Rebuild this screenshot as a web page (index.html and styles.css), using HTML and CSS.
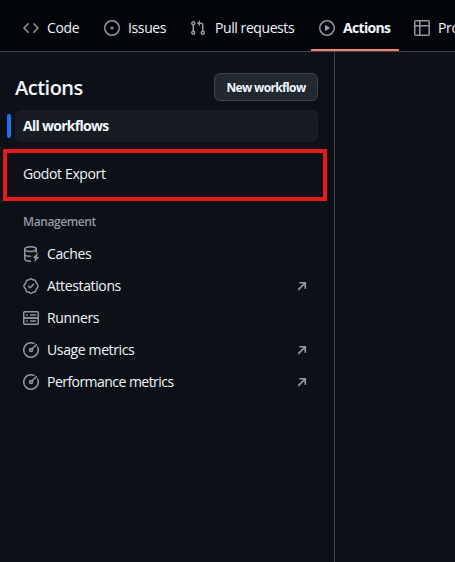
FILE: index.html
```html
<!DOCTYPE html>
<html lang="en">
<head>
<meta charset="utf-8">
<title>Actions</title>
<link rel="stylesheet" href="styles.css">
</head>
<body>
<nav class="tabs">
  <a class="tab"><svg class="icon" viewBox="0 0 16 16"><path d="M5.25 3.75 1 8l4.25 4.25M10.75 3.75 15 8l-4.25 4.25"/></svg><span class="code">Code</span></a>
  <a class="tab"><svg class="icon" viewBox="0 0 16 16"><circle cx="8" cy="8" r="7.25"/><circle class="solid" cx="8" cy="8" r="1.5"/></svg><span class="issues">Issues</span></a>
  <a class="tab"><svg class="icon" viewBox="0 0 16 16"><circle cx="3.25" cy="3.25" r="1.5"/><circle cx="3.25" cy="12.75" r="1.5"/><circle cx="12.75" cy="12.75" r="1.5"/><path d="M3.25 4.75v6.5M12.75 11.25V5A1.75 1.75 0 0 0 11 3.25H9"/><path class="solid" d="M7.2 3.07 9.57.68a.25.25 0 0 1 .43.18v4.78a.25.25 0 0 1-.43.18L7.2 3.43a.25.25 0 0 1 0-.36Z"/></svg><span class="pulls">Pull requests</span></a>
  <a class="tab current"><svg class="icon" viewBox="0 0 16 16"><circle cx="8" cy="8" r="7.25"/><path class="solid" d="M6 5.4v5.2c0 .3.35.5.6.34l4.27-2.6a.4.4 0 0 0 0-.68L6.6 5.06a.4.4 0 0 0-.6.34Z"/></svg><span class="actions">Actions</span></a>
  <a class="tab projects"><svg class="icon" viewBox="0 0 16 16"><rect x=".75" y=".75" width="14.5" height="14.5" rx="1"/><path d="M.75 5.75h14.5M5.75.75v14.5"/></svg><span>Projects</span></a>
</nav>
<div class="page">
  <aside class="sidebar">
    <header class="heading"><h1>Actions</h1><button>New workflow</button></header>
    <a class="row selected"><span>All workflows</span></a>
    <div class="highlight"><span>Godot Export</span></div>
    <h2>Management</h2>
    <a class="row"><svg class="icon" viewBox="0 0 16 16"><ellipse cx="7.5" cy="3.1" rx="5.75" ry="2.35"/><path d="M1.75 3.1v9.65c0 1.35 2.2 2.3 5.75 2.5M1.75 8c0 1.35 2.2 2.25 5.75 2.25M13.25 3.1v3.15"/><path class="solid" d="m14.25 7.1-4.1 4.3c-.25.3-.1.7.3.7h1.8l-.9 3.3c-.1.5.3.7.6.4l3.8-4.3c.3-.3.1-.75-.3-.75H13.8l.95-3.2c.15-.5-.2-.75-.5-.45Z"/></svg><span>Caches</span></a>
    <a class="row"><svg class="icon" viewBox="0 0 16 16"><path d="M7 1.1q1-.7 2 0l1 .75 1.3.15q1.3.2 1.6 1.5l.25 1.3 1.3 1.6q1.2 1.6 0 3.2l-1.3 1.6-.25 1.3q-.3 1.3-1.6 1.5l-1.3.15-1 .75q-1 .7-2 0l-1-.75-1.3-.15q-1.3-.2-1.6-1.5l-.25-1.3-1.3-1.6q-1.2-1.6 0-3.2l1.3-1.6.25-1.3q.3-1.3 1.6-1.5L6 1.85Z"/><path d="m5.5 8.2 1.6 1.6 3.4-3.4"/></svg><span>Attestations</span><svg class="arrow" viewBox="0 0 16 16"><path d="m4.2 11.8 7-7M5.25 4.75h6v6"/></svg></a>
    <a class="row"><svg class="icon" viewBox="0 0 16 16"><rect x=".75" y="1.75" width="14.5" height="6.25" rx="1"/><rect x=".75" y="8" width="14.5" height="6.25" rx="1"/><path class="slots" d="M3.4 5h.8M7.5 5h5M3.4 11h.8M7.5 11h5"/></svg><span>Runners</span></a>
    <a class="row"><svg class="icon" viewBox="0 0 16 16"><path d="M11 1.4a7.25 7.25 0 1 0 3.6 3.6M9 7l4.5-4.5"/><circle cx="8" cy="8" r="1.5"/></svg><span class="usage">Usage metrics</span><svg class="arrow" viewBox="0 0 16 16"><path d="m4.2 11.8 7-7M5.25 4.75h6v6"/></svg></a>
    <a class="row"><svg class="icon" viewBox="0 0 16 16"><path d="M11 1.4a7.25 7.25 0 1 0 3.6 3.6M9 7l4.5-4.5"/><circle cx="8" cy="8" r="1.5"/></svg><span class="performance">Performance metrics</span><svg class="arrow" viewBox="0 0 16 16"><path d="m4.2 11.8 7-7M5.25 4.75h6v6"/></svg></a>
  </aside>
  <main></main>
</div>
</body>
</html>
```
FILE: styles.css
```css
* { box-sizing: border-box; }
body {
  margin: 0;
  height: 562px;
  overflow: hidden;
  background: #0d1117;
  color: #f0f6fc;
  font: 14px/20px "Open Sans", "Noto Sans", sans-serif;
  letter-spacing: -.37px;
}
span { white-space: nowrap; }
.tabs {
  display: flex;
  gap: 8px;
  height: 52px;
  padding-left: 15px;
  overflow: hidden;
  background: #010409;
  border-bottom: 1px solid #3d444d;
}
.tab {
  display: flex;
  flex: none;
  align-items: center;
  gap: 8px;
  padding: 7px 8px 0;
  border-bottom: 2px solid transparent;
}
.tab.current { border-color: #f78166; font-weight: 700; letter-spacing: -.68px; }
.icon, .arrow {
  flex: none;
  width: 16px;
  height: 16px;
  fill: none;
  stroke: #9198a1;
  stroke-width: 1.5;
  stroke-linecap: round;
  stroke-linejoin: round;
}
.solid { fill: #9198a1; stroke: none; }
.slots { stroke-width: 1.3; }
.arrow { margin-left: auto; stroke-linecap: butt; stroke-linejoin: miter; stroke-width: 1.7; }
.code { width: 33px; }
.issues { width: 38px; }
.pulls { width: 81px; padding-left: 1px; letter-spacing: -.42px; }
.actions { width: 48px; }
.projects { margin-left: -1px; }
.usage { letter-spacing: -.37px; }
.performance { letter-spacing: -.54px; }
.page { display: flex; height: 510px; }
.sidebar {
  flex: none;
  width: 335px;
  padding: 21px 16px 0 15px;
  border-right: 1px solid #3d444d;
}
main { flex: 1; }
.heading { display: flex; justify-content: space-between; width: 303px; height: 37px; }
h1 { margin: 0; font-size: 20px; line-height: 30px; font-weight: 600; letter-spacing: -.5px; }
button {
  width: 104px;
  height: 28px;
  padding: 1px 0 0;
  border: 1px solid #3d444d;
  border-radius: 6px;
  background: #212830;
  color: inherit;
  font: 700 12px/20px "Open Sans", sans-serif;
  letter-spacing: -.65px;
}
.row {
  display: flex;
  align-items: center;
  gap: 8px;
  width: 303px;
  height: 32px;
  padding: 0 8px;
}
.row.selected {
  position: relative;
  border-radius: 6px;
  background: #171b22;
  font-weight: 700;
  letter-spacing: -.72px;
}
.selected::before {
  content: "";
  position: absolute;
  left: -8px;
  top: 4px;
  width: 4px;
  height: 24px;
  border-radius: 4px;
  background: #1f6feb;
}
.highlight {
  display: flex;
  align-items: center;
  width: 324px;
  height: 52px;
  margin: 7px 0 0 -12px;
  padding: 0 16px 2px;
  border: 4px solid #e51b1b;
}
h2 {
  margin: 11px 0 7px 8px;
  color: #9198a1;
  font-size: 12px;
  line-height: 19px;
  font-weight: 600;
  letter-spacing: -.4px;
}
```
